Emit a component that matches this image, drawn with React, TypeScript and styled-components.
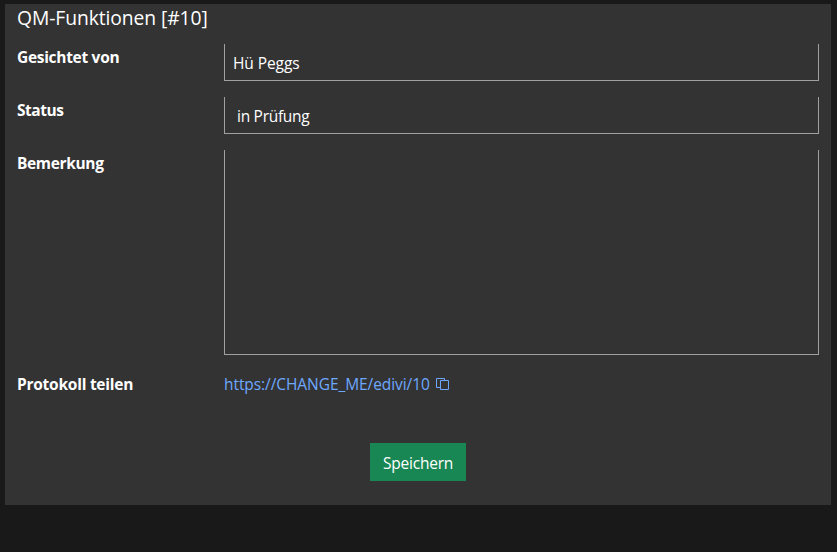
import React from "react";
import styled, { createGlobalStyle } from "styled-components";

const GlobalStyle = createGlobalStyle`
  * { box-sizing: border-box; }
  html, body { margin: 0; background: #191919; }
  body {
    color: #fff;
    font: 400 15.5px/24px "Segoe UI", "Open Sans", "Noto Sans", sans-serif;
    overflow: hidden;
  }
`;

const Page = styled.main`
  height: 552px;
  padding: 4px 6px 0 5px;
`;

const Panel = styled.form`
  height: 501px;
  padding: 0 12px;
  background: #333;
  display: flex;
  flex-direction: column;
`;

const Title = styled.h5`
  margin: 0;
  height: 40px;
  padding-top: 2px;
  font-size: 19.3px;
  font-weight: 400;
  line-height: 24px;
`;

const Row = styled.div`
  display: grid;
  grid-template-columns: 207px 1fr;
  margin-bottom: 16px;
`;

const Label = styled.label<{ $track?: number }>`
  padding-top: 1px;
  font-weight: 700;
  letter-spacing: ${(p) => p.$track ?? 0}px;
`;

const Field = styled.div<{ $height?: number; $indent?: number }>`
  height: ${(p) => p.$height ?? 37}px;
  padding: 7px 8px 0 ${(p) => p.$indent ?? 8}px;
  border: 1px solid #a0a0a0;
  border-top: 0;
`;

const ShareLink = styled.a`
  display: flex;
  align-items: center;
  height: 24px;
  margin-top: 1px;
  color: #6ea8fe;
  text-decoration: none;
  svg { margin-left: 6px; }
`;

const Actions = styled.div`
  display: flex;
  justify-content: center;
  margin-top: 31px;
`;

const SaveButton = styled.button`
  width: 96px;
  height: 38px;
  padding: 2px 0 0;
  border: 0;
  background: #198754;
  color: #fff;
  font: inherit;
`;

const Span = styled.span<{ $track?: number }>`
  letter-spacing: ${(p) => p.$track ?? 0}px;
  white-space: nowrap;
`;

const CopyIcon = () => (
  <svg width="13" height="12" viewBox="0 0 13 12" fill="none" stroke="#6ea8fe">
    <path d="M4 9.5H.5V.5h8V2" />
    <path d="M4.5 2.5h8v9h-8z" />
  </svg>
);

export default function App() {
  return (
    <>
      <GlobalStyle />
      <Page>
        <Panel>
          <Title><Span $track={-0.08}>QM-Funktionen [#10]</Span></Title>
          <Row>
            <Label $track={-0.3}>Gesichtet von</Label>
            <Field><Span $track={-0.08}>Hü Peggs</Span></Field>
          </Row>
          <Row>
            <Label $track={-0.45}>Status</Label>
            <Field $indent={12}><Span $track={-0.28}>in Prüfung</Span></Field>
          </Row>
          <Row>
            <Label $track={-0.35}>Bemerkung</Label>
            <Field $height={205} />
          </Row>
          <Row>
            <Label $track={-0.25}>Protokoll teilen</Label>
            <ShareLink>
              <Span $track={-0.07}>https://CHANGE_ME/edivi/10</Span>
              <CopyIcon />
            </ShareLink>
          </Row>
          <Actions>
            <SaveButton type="button"><Span $track={-0.22}>Speichern</Span></SaveButton>
          </Actions>
        </Panel>
      </Page>
    </>
  );
}
